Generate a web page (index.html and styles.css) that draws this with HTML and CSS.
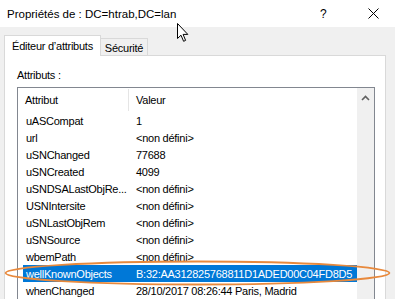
FILE: index.html
```html
<!DOCTYPE html>
<html lang="fr">
<head>
<meta charset="utf-8">
<title>Propriétés de : DC=htrab,DC=lan</title>
<link rel="stylesheet" href="styles.css">
</head>
<body>
<div class="dialog">
  <div class="titlebar">
    <span class="title">Propriétés de : DC=htrab,DC=lan</span>
    <span class="help">?</span>
    <span class="close"><svg width="11" height="11" viewBox="0 0 11 11"><path d="M0.5 0.5 L10.5 10.5 M10.5 0.5 L0.5 10.5" stroke="#000" stroke-width="1" fill="none"/></svg></span>
  </div>
  <div class="tabs">
    <div class="tab selected">Éditeur d’attributs</div>
    <div class="tab">Sécurité</div>
  </div>
  <div class="panel">
    <div class="label">Attributs :</div>
    <div class="listbox">
      <div class="list">
        <div class="header">
          <div class="hcell c1">Attribut</div>
          <div class="hcell c2">Valeur</div>
        </div>
        <div class="rows">
          <div class="row"><span class="cell c1">uASCompat</span><span class="cell c2">1</span></div>
          <div class="row"><span class="cell c1">url</span><span class="cell c2">&lt;non défini&gt;</span></div>
          <div class="row"><span class="cell c1">uSNChanged</span><span class="cell c2">77688</span></div>
          <div class="row"><span class="cell c1">uSNCreated</span><span class="cell c2">4099</span></div>
          <div class="row"><span class="cell c1">uSNDSALastObjRe...</span><span class="cell c2">&lt;non défini&gt;</span></div>
          <div class="row"><span class="cell c1">USNIntersite</span><span class="cell c2">&lt;non défini&gt;</span></div>
          <div class="row"><span class="cell c1">uSNLastObjRem</span><span class="cell c2">&lt;non défini&gt;</span></div>
          <div class="row"><span class="cell c1">uSNSource</span><span class="cell c2">&lt;non défini&gt;</span></div>
          <div class="row"><span class="cell c1">wbemPath</span><span class="cell c2">&lt;non défini&gt;</span></div>
          <div class="row sel"><span class="cell c1">wellKnownObjects</span><span class="cell c2">B:32:AA312825768811D1ADED00C04FD8D5</span></div>
          <div class="row"><span class="cell c1">whenChanged</span><span class="cell c2">28/10/2017 08:26:44 Paris, Madrid</span></div>
        </div>
      </div>
      <div class="scrollbar">
        <svg class="arrow-up" width="9" height="6" viewBox="0 0 9 6"><path d="M1 5 L4.5 1.5 L8 5" stroke="#606060" stroke-width="1.6" fill="none"/></svg>
      </div>
    </div>
  </div>
</div>
<svg class="annotation" width="395" height="299" viewBox="0 0 395 299">
  <ellipse cx="197.5" cy="273" rx="192" ry="11.5" fill="none" stroke="#e8893c" stroke-width="1.8"/>
</svg>
<svg class="cursor" width="13" height="20" viewBox="0 0 13 20">
  <path d="M0.5 0.5 L0.5 15.5 L4 12.2 L6.6 18.3 L8.6 17.4 L6.1 11.4 L10.8 11.4 Z" fill="#fff" stroke="#000" stroke-width="1" stroke-linejoin="miter"/>
</svg>
</body>
</html>
```
FILE: styles.css
```css
* { box-sizing: border-box; }
html, body { margin: 0; padding: 0; }
body {
  width: 395px;
  height: 299px;
  overflow: hidden;
  background: #f0f0f0;
  font-family: "Liberation Sans", Arial, sans-serif;
  font-size: 11px;
  letter-spacing: -0.25px;
  color: #000;
  position: relative;
}
.dialog { display: flex; flex-direction: column; height: 299px; overflow: hidden; }
.titlebar {
  height: 27px;
  background: #fff;
  display: flex;
  align-items: center;
  padding-left: 7px;
  flex: none;
}
.title { font-size: 11.5px; letter-spacing: 0; flex: 1; padding-top: 1px; }
.help { font-size: 12px; letter-spacing: 0; width: 10px; margin-right: 38px; padding-top: 1px; }
.close { width: 11px; height: 11px; margin-right: 16px; display: flex; }
.tabs {
  margin-top: 8px;
  height: 20px;
  padding-left: 4px;
  display: flex;
  align-items: flex-end;
  flex: none;
}
.tab {
  border: 1px solid #d9d9d9;
  border-bottom: none;
  height: 17px;
  display: flex;
  align-items: center;
  justify-content: center;
  background: #f0f0f0;
  position: relative;
}
.tab + .tab { margin-left: -1px; width: 48px; padding-top: 1px; }
.tab.selected {
  width: 97px;
  height: 21px;
  margin-bottom: -1px;
  background: #fff;
  z-index: 1;
  padding-bottom: 1px;
}
.panel {
  margin: 0 9px 0 4px;
  flex: 1;
  min-height: 0;
  overflow: hidden;
  background: #fff;
  border: 1px solid #d9d9d9;
  border-bottom: none;
  padding: 13px 11px 0 12px;
}
.label { height: 13px; line-height: 13px; margin-bottom: 5px; }
.listbox {
  width: 358px;
  height: 212px;
  border: 1px solid #828790;
  border-bottom: none;
  display: flex;
  overflow: hidden;
}
.list { flex: 1; display: flex; flex-direction: column; min-height: 0; }
.header { height: 24px; display: flex; flex: none; }
.hcell { display: flex; align-items: center; }
.hcell.c1 { width: 111px; padding-left: 7px; border-right: 1px solid #e5e5e5; height: 22px; margin-top: 1px; }
.hcell.c2 { padding-left: 7px; flex: 1; }
.rows { padding-left: 5px; display: flex; flex-direction: column; }
.row { height: 17px; flex: none; display: flex; align-items: center; white-space: nowrap; }
.cell.c1 { width: 106px; padding-left: 3px; }
.cell.c2 { padding-left: 7px; flex: 1; }
.row.sel { background: #0078d7; color: #fff; }
.scrollbar {
  width: 17px;
  background: #f0f0f0;
  display: flex;
  justify-content: center;
  align-items: flex-start;
  padding-top: 7px;
}
.arrow-up { display: block; }
.annotation { position: absolute; left: 0; top: 0; pointer-events: none; }
.cursor { position: absolute; left: 177px; top: 23px; pointer-events: none; }
```
